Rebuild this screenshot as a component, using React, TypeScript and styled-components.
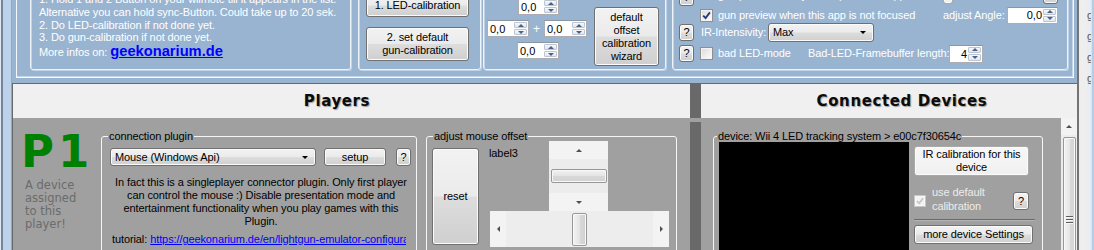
import React from 'react';
import styled, { createGlobalStyle } from 'styled-components';

const GlobalStyle = createGlobalStyle`
  html, body { margin: 0; padding: 0; }
  body {
    background: #99b4d1;
    font-family: "Liberation Sans", Arial, sans-serif;
    font-size: 11px;
    color: #000;
  }
  *, *::before, *::after { box-sizing: border-box; }
`;

const Win = styled.div`
  display: flex;
  width: 1094px;
  height: 250px;
  overflow: hidden;
  letter-spacing: -0.1px;
`;

const LeftEdge = styled.div`
  flex: none;
  width: 12px;
  background: linear-gradient(90deg, #dde8f4 0 1px, #75839a 1px 3px, #bcd2ea 3px 11px, #8ea8c7 11px 12px);
`;

const Main = styled.div`
  flex: none;
  width: 1065px;
  display: flex;
  flex-direction: column;
`;

const RightEdge = styled.div`
  flex: none;
  width: 17px;
  display: flex;
`;

const EdgeDark = styled.div`
  width: 2px;
  background: #747474;
`;

const EdgeLight = styled.div`
  width: 8px;
  background: #eeeeee;
`;

const EdgeGlyphs = styled.div`
  width: 4px;
  overflow: hidden;
  background: #e6edf5;
  color: #555;
  line-height: 21px;
  padding-top: 5px;
  white-space: nowrap;
`;

const EdgeBlue = styled.div`
  flex: 1;
  background: linear-gradient(90deg, #d5e3f2 0 1px, #b4cce6 1px);
`;

/* ---------- common controls ---------- */

const Btn = styled.button<{ $w: number; $h: number; $ml?: number; $mt?: number; $flat?: boolean }>`
  flex: none;
  width: ${(p) => p.$w}px;
  height: ${(p) => p.$h}px;
  margin: ${(p) => p.$mt ?? 0}px 0 0 ${(p) => p.$ml ?? 0}px;
  padding: 0;
  border: 1px solid ${(p) => (p.$flat ? '#a9a9a9' : '#707070')};
  border-radius: 3px;
  background: ${(p) =>
    p.$flat
      ? 'linear-gradient(#f7f7f7, #f0f0f0)'
      : 'linear-gradient(#f2f2f2 0%, #ebebeb 49%, #dddddd 51%, #cfcfcf 100%)'};
  box-shadow: inset 0 0 0 1px #fbfbfb;
  font-family: "Liberation Sans", Arial, sans-serif;
  font-size: 11px;
  letter-spacing: -0.1px;
  line-height: 13px;
  color: #000;
  text-align: center;
  cursor: default;
`;

const Arrow = styled.span<{ $dir: 'up' | 'down' | 'left' | 'right'; $s?: number; $c?: string }>`
  display: block;
  width: 0;
  height: 0;
  border-style: solid;
  ${({ $dir, $s = 3, $c = '#4e4e4e' }) => {
    if ($dir === 'up') return `border-width: 0 ${$s}px ${$s}px ${$s}px; border-color: transparent transparent ${$c} transparent;`;
    if ($dir === 'down') return `border-width: ${$s}px ${$s}px 0 ${$s}px; border-color: ${$c} transparent transparent transparent;`;
    if ($dir === 'left') return `border-width: ${$s}px ${$s}px ${$s}px 0; border-color: transparent ${$c} transparent transparent;`;
    return `border-width: ${$s}px 0 ${$s}px ${$s}px; border-color: transparent transparent transparent ${$c};`;
  }}
`;

const UpDownBox = styled.div<{ $w: number; $h: number; $ml?: number }>`
  flex: none;
  display: flex;
  width: ${(p) => p.$w}px;
  height: ${(p) => p.$h}px;
  margin-left: ${(p) => p.$ml ?? 0}px;
  background: #fff;
  border: 1px solid #abadb3;
  border-top-color: #8d96a3;
`;

const UpDownValue = styled.span<{ $right?: boolean }>`
  flex: 1;
  display: flex;
  align-items: center;
  justify-content: ${(p) => (p.$right ? 'flex-end' : 'flex-start')};
  padding: 0 1px 0 2px;
  color: #000;
  letter-spacing: 0;
`;

const Spin = styled.div`
  flex: none;
  width: 13px;
  display: flex;
  flex-direction: column;
  gap: 1px;
  margin: 1px 1px 1px 0;
`;

const SpinHalf = styled.div`
  flex: 1;
  display: flex;
  align-items: center;
  justify-content: center;
  background: linear-gradient(#f6f8fb, #e1e7ef);
  border: 1px solid #bcc5d2;
  border-radius: 1px;
`;

const UpDown = ({ w, h = 17, value, right, ml }: { w: number; h?: number; value: string; right?: boolean; ml?: number }) => (
  <UpDownBox $w={w} $h={h} $ml={ml}>
    <UpDownValue $right={right}>{value}</UpDownValue>
    <Spin>
      <SpinHalf>
        <Arrow $dir="up" $s={3} $c="#4d6185" />
      </SpinHalf>
      <SpinHalf>
        <Arrow $dir="down" $s={3} $c="#4d6185" />
      </SpinHalf>
    </Spin>
  </UpDownBox>
);

const ComboBox = styled.div<{ $w: number; $h: number; $ml?: number }>`
  flex: none;
  display: flex;
  align-items: center;
  justify-content: space-between;
  width: ${(p) => p.$w}px;
  height: ${(p) => p.$h}px;
  margin-left: ${(p) => p.$ml ?? 0}px;
  padding: 0 7px 0 4px;
  border: 1px solid #707070;
  border-radius: 3px;
  background: linear-gradient(#f2f2f2 0%, #ebebeb 49%, #dddddd 51%, #cfcfcf 100%);
  box-shadow: inset 0 0 0 1px #fbfbfb;
  color: #000;
  white-space: nowrap;
`;

const Combo = ({ w, h, value, ml }: { w: number; h: number; value: string; ml?: number }) => (
  <ComboBox $w={w} $h={h} $ml={ml}>
    <span>{value}</span>
    <Arrow $dir="down" $s={3.5} $c="#000" />
  </ComboBox>
);

const CheckFrame = styled.span<{ $size: number; $ml?: number; $disabled?: boolean }>`
  flex: none;
  display: inline-flex;
  align-items: center;
  justify-content: center;
  width: ${(p) => p.$size}px;
  height: ${(p) => p.$size}px;
  margin-left: ${(p) => p.$ml ?? 0}px;
  border: 1px solid ${(p) => (p.$disabled ? '#c6c6c6' : '#8f8f8f')};
  background: ${(p) => (p.$disabled ? '#f2f2f2' : 'linear-gradient(135deg, #d9d9d9, #ffffff)')};
  box-shadow: inset 0 0 0 1px ${(p) => (p.$disabled ? '#f7f7f7' : '#f4f4f4')};
`;

const Check = ({ checked, size = 13, ml, disabled }: { checked?: boolean; size?: number; ml?: number; disabled?: boolean }) => (
  <CheckFrame $size={size} $ml={ml} $disabled={disabled}>
    {checked && (
      <svg width={size - 4} height={size - 4} viewBox="0 0 9 9">
        <path d="M1.2 4.6 L3.6 7.1 L7.9 1.4" fill="none" stroke={disabled ? '#c4c4c4' : '#23397a'} strokeWidth="1.8" />
      </svg>
    )}
  </CheckFrame>
);

const Label = styled.span<{ $w?: number; $ml?: number; $color?: string; $lh?: number; $self?: string }>`
  flex: none;
  width: ${(p) => (p.$w ? `${p.$w}px` : 'auto')};
  margin-left: ${(p) => p.$ml ?? 0}px;
  color: ${(p) => p.$color ?? 'inherit'};
  line-height: ${(p) => p.$lh ?? 13}px;
  align-self: ${(p) => p.$self ?? 'auto'};
  white-space: nowrap;
`;

/* ---------- top panel ---------- */

const TopPanel = styled.div`
  flex: none;
  height: 83px;
  background: #99b4d1;
  padding: 0 3px 5px 4px;
  display: flex;
  flex-direction: column;
  justify-content: flex-end;
  overflow: hidden;
`;

const TopFrame = styled.div`
  flex: none;
  height: 150px;
  display: flex;
  align-items: flex-end;
  padding: 0 5px 7px 13px;
  border: 1px solid #f4f7fb;
  border-top: none;
  box-shadow: inset -1px -1px 0 #c5d5e7;
`;

const TopGroup = styled.div<{ $w: number; $ml?: number }>`
  flex: none;
  width: ${(p) => p.$w}px;
  height: 130px;
  margin-left: ${(p) => p.$ml ?? 0}px;
  border: 1px solid #eef3f8;
  border-radius: 3px;
  box-shadow: inset 1px 1px 0 #c2d2e4, 1px 1px 0 #c2d2e4;
  display: flex;
`;

const InfoGroup = styled(TopGroup)`
  flex-direction: column;
  justify-content: flex-end;
  padding: 0 0 10px 8px;
  color: #fff;
`;

const InfoLine = styled.div`
  line-height: 12.7px;
  white-space: nowrap;
`;

const MoreLine = styled.div`
  line-height: 14px;
  white-space: nowrap;
`;

const BigLink = styled.a`
  font-size: 14.7px;
  font-weight: bold;
  letter-spacing: 0;
  color: #0000ff;
  text-decoration: underline;
`;

const CalGroup = styled(TopGroup)`
  flex-direction: column;
  justify-content: flex-end;
  gap: 10px;
  padding: 0 0 8px 7px;
`;

const OffsetGroup = styled(TopGroup)`
  align-items: flex-end;
  padding: 0 0 3px 3px;
`;

const Cross = styled.div`
  flex: none;
  width: 100px;
  display: flex;
  flex-direction: column;
  gap: 5px;
  margin-bottom: 7px;
`;

const CrossRow = styled.div`
  display: flex;
  align-items: center;
`;

const Plus = styled.span`
  width: 15px;
  text-align: center;
  color: #fff;
  font-size: 12px;
`;

const OptGroup = styled(TopGroup)`
  flex-direction: column;
  justify-content: flex-end;
  padding: 0 9px 6px 6px;
  color: #fff;
`;

const OptRow = styled.div<{ $h: number; $mt?: number; $end?: boolean }>`
  flex: none;
  display: flex;
  align-items: ${(p) => (p.$end ? 'flex-end' : 'center')};
  height: ${(p) => p.$h}px;
  margin-top: ${(p) => p.$mt ?? 0}px;
`;

const PushRight = styled.div<{ $gap?: number; $mb?: number }>`
  margin-left: auto;
  display: flex;
  align-items: flex-end;
  gap: ${(p) => p.$gap ?? 0}px;
  margin-bottom: ${(p) => p.$mb ?? 0}px;
`;

const AngleBox = styled.div`
  margin-left: auto;
  display: flex;
  align-items: center;
`;

/* ---------- lower area ---------- */

const Lower = styled.div`
  flex: 1;
  display: flex;
  min-height: 0;
  border-top: 1px solid #696969;
  border-left: 1px solid #696969;
  background: #a0a0a0;
`;

const Panel = styled.div<{ $w: number }>`
  flex: none;
  width: ${(p) => p.$w}px;
  display: flex;
  flex-direction: column;
  min-height: 0;
`;

const PanelHeader = styled.div<{ $padL?: number; $padR?: number }>`
  flex: none;
  height: 34px;
  display: flex;
  align-items: center;
  justify-content: center;
  padding: 0 ${(p) => p.$padR ?? 0}px 0 ${(p) => p.$padL ?? 0}px;
  background: #f0f0f0;
  font-family: "DejaVu Sans", sans-serif;
  font-weight: bold;
  font-size: 15px;
  letter-spacing: 0.6px;
  color: #0c0c0c;
  text-shadow: 1px 1px 1px rgba(0, 0, 0, 0.35);
`;

const Splitter = styled.div`
  flex: none;
  width: 11px;
  background: linear-gradient(#696969 0 34px, #a0a0a0 34px 38px, #696969 38px);
`;

const PlayersBody = styled.div`
  flex: 1;
  display: flex;
  padding: 12px 0 0 12px;
`;

const PlayerTag = styled.div`
  flex: none;
  width: 76px;
`;

const PlayerNum = styled.div`
  margin-left: -4px;
  font-family: "DejaVu Sans", sans-serif;
  font-weight: bold;
  font-size: 45px;
  line-height: 44px;
  letter-spacing: 4px;
  color: #008000;
`;

const PlayerNote = styled.div`
  margin-top: 5px;
  font-family: "DejaVu Sans", sans-serif;
  font-size: 11.5px;
  line-height: 13px;
  letter-spacing: 0;
  color: #6b6b6b;
`;

const Field = styled.fieldset<{ $w: number; $ml?: number }>`
  flex: none;
  width: ${(p) => p.$w}px;
  height: 170px;
  margin: 0 0 0 ${(p) => p.$ml ?? 0}px;
  padding: 0;
  min-width: 0;
  border: 1px solid #f6f6f6;
  border-radius: 3px;
`;

const Legend = styled.legend<{ $x: number }>`
  margin-left: ${(p) => p.$x}px;
  padding: 0 1px;
  font-size: 11px;
  line-height: 12px;
  color: #000;
  white-space: nowrap;
`;

const PluginRow = styled.div`
  display: flex;
  align-items: center;
  margin: 6px 0 0 8px;
`;

const PluginText = styled.div`
  width: 302px;
  margin: 10px 0 0 8px;
  text-align: center;
  line-height: 13px;
  white-space: nowrap;
`;

const TutorialRow = styled.div`
  display: flex;
  margin: 5px 0 0 10px;
  line-height: 13px;
  white-space: nowrap;
`;

const TutorialLink = styled.a`
  display: block;
  width: 256px;
  margin-left: 3px;
  overflow: hidden;
  color: #0000ff;
  text-decoration: underline;
`;

const OffsetBody = styled.div`
  display: flex;
  align-items: flex-start;
  margin-top: -1px;
  padding-left: 5px;
`;

const OffsetArea = styled.div`
  display: flex;
  flex-direction: column;
  margin-left: 10px;
`;

const OffsetTop = styled.div`
  display: flex;
  height: 70px;
`;

const OffsetLabel = styled.span`
  flex: none;
  width: 60px;
  padding-top: 6px;
  line-height: 13px;
`;

const VScroll = styled.div<{ $w: number; $h: number }>`
  flex: none;
  display: flex;
  flex-direction: column;
  width: ${(p) => p.$w}px;
  height: ${(p) => p.$h}px;
  background: #f0f0f0;
`;

const HScroll = styled.div<{ $w: number; $h: number; $ml?: number }>`
  flex: none;
  display: flex;
  width: ${(p) => p.$w}px;
  height: ${(p) => p.$h}px;
  margin-left: ${(p) => p.$ml ?? 0}px;
  background: #ededed;
`;

const ScrollCap = styled.div<{ $len: number; $horiz?: boolean }>`
  flex: none;
  display: flex;
  align-items: center;
  justify-content: center;
  ${(p) => (p.$horiz ? `width: ${p.$len}px;` : `height: ${p.$len}px;`)}
  background: #f3f3f3;
`;

const VTrack = styled.div`
  flex: 1;
  display: flex;
  flex-direction: column;
  padding: 0 1px 0 2px;
  background: #ececec;
`;

const HTrack = styled.div`
  flex: 1;
  display: flex;
  padding: 2px 0 1px;
`;

const Thumb = styled.div<{ $at: number; $len: number; $horiz?: boolean }>`
  flex: none;
  display: flex;
  justify-content: center;
  ${(p) =>
    p.$horiz
      ? `margin-left: ${p.$at}px; width: ${p.$len}px;`
      : `margin-top: ${p.$at}px; height: ${p.$len}px;`}
  border: 1px solid #979797;
  border-radius: 2px;
  background: ${(p) =>
    p.$horiz
      ? 'linear-gradient(90deg, #f3f3f3, #e4e4e4 50%, #d8d8d8 51%, #d2d2d2)'
      : 'linear-gradient(#f3f3f3, #e4e4e4 50%, #d8d8d8 51%, #d2d2d2)'};
  box-shadow: inset 0 0 0 1px #f8f8f8;
`;

const SideThumb = styled(Thumb)`
  background: linear-gradient(90deg, #f4f4f4, #e6e6e6 50%, #dadada 51%, #d4d4d4);
`;

const Grip = styled.div`
  width: 7px;
  height: 8px;
  margin-top: 78px;
  background: repeating-linear-gradient(#5e5e5e 0 1px, #f6f6f6 1px 2px, transparent 2px 3px);
`;

const DevBody = styled.div`
  flex: 1;
  display: flex;
  min-height: 0;
`;

const DevContent = styled.div`
  flex: 1;
  padding: 12px 0 0 12px;
`;

const DevInner = styled.div`
  display: flex;
  align-items: flex-start;
  padding-left: 5px;
`;

const Preview = styled.div`
  flex: none;
  width: 190px;
  height: 130px;
  background: #000;
`;

const DevSide = styled.div`
  flex: none;
  width: 121px;
  margin-left: 5px;
  display: flex;
  flex-direction: column;
`;

const DefaultRow = styled.div`
  display: flex;
  align-items: center;
  height: 18px;
  margin-top: 16px;
`;

const MutedLabel = styled.span`
  margin: 0 0 4px 6px;
  line-height: 14px;
  color: #ececec;
`;

const HelpBtn = styled(Btn)`
  margin: 0 6px 0 auto;
`;

const Rule = styled.div`
  height: 2px;
  margin-top: 9px;
  border-top: 1px solid #6a6a6a;
  border-bottom: 1px solid #b4b4b4;
`;

export default function App() {
  return (
    <>
      <GlobalStyle />
      <Win>
        <LeftEdge />
        <Main>
          <TopPanel>
            <TopFrame>
              <InfoGroup $w={321}>
                <InfoLine>1. Hold 1 and 2 Button on your wiimote till it appears in the list.</InfoLine>
                <InfoLine>Alternative you can hold sync-Button. Could take up to 20 sek.</InfoLine>
                <InfoLine>2. Do LED-calibration if not done yet.</InfoLine>
                <InfoLine>3. Do gun-calibration if not done yet.</InfoLine>
                <MoreLine>
                  More infos on: <BigLink>geekonarium.de</BigLink>
                </MoreLine>
              </InfoGroup>

              <CalGroup $w={123} $ml={7}>
                <Btn $w={103} $h={23}>1. LED-calibration</Btn>
                <Btn $w={103} $h={34}>
                  2. set default
                  <br />
                  gun-calibration
                </Btn>
              </CalGroup>

              <OffsetGroup $w={183} $ml={2}>
                <Cross>
                  <UpDown w={41} value="0,0" ml={31} />
                  <CrossRow>
                    <UpDown w={42} value="0,0" />
                    <Plus>+</Plus>
                    <UpDown w={43} value="0,0" />
                  </CrossRow>
                  <UpDown w={42} value="0,0" ml={30} />
                </Cross>
                <Btn $w={65} $h={59} $ml={7}>
                  default
                  <br />
                  offset
                  <br />
                  calibration
                  <br />
                  wizard
                </Btn>
              </OffsetGroup>

              <OptGroup $w={396} $ml={6}>
                <OptRow $h={17} $end>
                  <Btn $w={15} $h={17}>?</Btn>
                  <Label $ml={24} $self="flex-start">gun preview always on top of other apps</Label>
                  <PushRight $gap={90} $mb={2}>
                    <Btn $w={10} $h={14} $flat />
                    <Btn $w={15} $h={14} />
                  </PushRight>
                </OptRow>
                <OptRow $h={18}>
                  <Check checked ml={21} />
                  <Label $ml={5}>gun preview when this app is not focused</Label>
                  <AngleBox>
                    <Label $w={64}>adjust Angle:</Label>
                    <UpDown w={51} value="0,0" right />
                  </AngleBox>
                </OptRow>
                <OptRow $h={20} $mt={-2}>
                  <Btn $w={15} $h={17}>?</Btn>
                  <Label $ml={7} $w={67}>IR-Intensivity:</Label>
                  <Combo w={106} h={19} value="Max" />
                </OptRow>
                <OptRow $h={19} $mt={2}>
                  <Btn $w={15} $h={17}>?</Btn>
                  <Check ml={6} />
                  <Label $ml={5} $w={90}>bad LED-mode</Label>
                  <Label $w={137}>Bad-LED-Framebuffer length:</Label>
                  <UpDown w={34} h={18} value="4" right ml={4} />
                </OptRow>
              </OptGroup>
            </TopFrame>
          </TopPanel>

          <Lower>
            <Panel $w={677}>
              <PanelHeader $padR={29}>Players</PanelHeader>
              <PlayersBody>
                <PlayerTag>
                  <PlayerNum>P1</PlayerNum>
                  <PlayerNote>
                    A device
                    <br />
                    assigned
                    <br />
                    to this
                    <br />
                    player!
                  </PlayerNote>
                </PlayerTag>

                <Field $w={316}>
                  <Legend $x={6}>connection plugin</Legend>
                  <PluginRow>
                    <Combo w={206} h={18} value="Mouse (Windows Api)" />
                    <Btn $w={62} $h={18} $ml={8}>setup</Btn>
                    <Btn $w={15} $h={18} $ml={10}>?</Btn>
                  </PluginRow>
                  <PluginText>
                    In fact this is a singleplayer connector plugin. Only first player
                    <br />
                    can control the mouse :) Disable presentation mode and
                    <br />
                    entertainment functionality when you play games with this
                    <br />
                    Plugin.
                  </PluginText>
                  <TutorialRow>
                    <span>tutorial:</span>
                    <TutorialLink>https://geekonarium.de/en/lightgun-emulator-configuration</TutorialLink>
                  </TutorialRow>
                </Field>

                <Field $w={251} $ml={9}>
                  <Legend $x={6}>adjust mouse offset</Legend>
                  <OffsetBody>
                    <Btn $w={47} $h={97} $mt={7}>reset</Btn>
                    <OffsetArea>
                      <OffsetTop>
                        <OffsetLabel>label3</OffsetLabel>
                        <VScroll $w={59} $h={70}>
                          <ScrollCap $len={18}>
                            <Arrow $dir="up" $s={3} />
                          </ScrollCap>
                          <VTrack>
                            <Thumb $at={10} $len={14} />
                          </VTrack>
                          <ScrollCap $len={18}>
                            <Arrow $dir="down" $s={3} />
                          </ScrollCap>
                        </VScroll>
                      </OffsetTop>
                      <HScroll $w={179} $h={36} $ml={1}>
                        <ScrollCap $len={16} $horiz>
                          <Arrow $dir="left" $s={3} />
                        </ScrollCap>
                        <HTrack>
                          <Thumb $at={66} $len={15} $horiz />
                        </HTrack>
                        <ScrollCap $len={16} $horiz>
                          <Arrow $dir="right" $s={3} />
                        </ScrollCap>
                      </HScroll>
                    </OffsetArea>
                  </OffsetBody>
                </Field>
              </PlayersBody>
            </Panel>

            <Splitter />

            <Panel $w={376}>
              <PanelHeader $padL={26}>Connected Devices</PanelHeader>
              <DevBody>
                <DevContent>
                  <Field $w={330}>
                    <Legend $x={3}>device: Wii 4 LED tracking system &gt; e00c7f30654c</Legend>
                    <DevInner>
                      <Preview />
                      <DevSide>
                        <Btn $w={115} $h={30} $mt={4} $flat>
                          IR calibration for this
                          <br />
                          device
                        </Btn>
                        <DefaultRow>
                          <Check checked disabled size={12} />
                          <MutedLabel>
                            use default
                            <br />
                            calibration
                          </MutedLabel>
                          <HelpBtn $w={16} $h={18}>?</HelpBtn>
                        </DefaultRow>
                        <Rule />
                        <Btn $w={119} $h={19} $mt={4}>more device Settings</Btn>
                      </DevSide>
                    </DevInner>
                  </Field>
                </DevContent>
                <VScroll $w={16} $h={132}>
                  <ScrollCap $len={17}>
                    <Arrow $dir="up" $s={3.5} />
                  </ScrollCap>
                  <VTrack>
                    <SideThumb $at={2} $len={200}>
                      <Grip />
                    </SideThumb>
                  </VTrack>
                </VScroll>
              </DevBody>
            </Panel>
          </Lower>
        </Main>
        <RightEdge>
          <EdgeDark />
          <EdgeLight />
          <EdgeGlyphs>
            g<br />g<br />g<br />g
          </EdgeGlyphs>
          <EdgeBlue />
        </RightEdge>
      </Win>
    </>
  );
}
